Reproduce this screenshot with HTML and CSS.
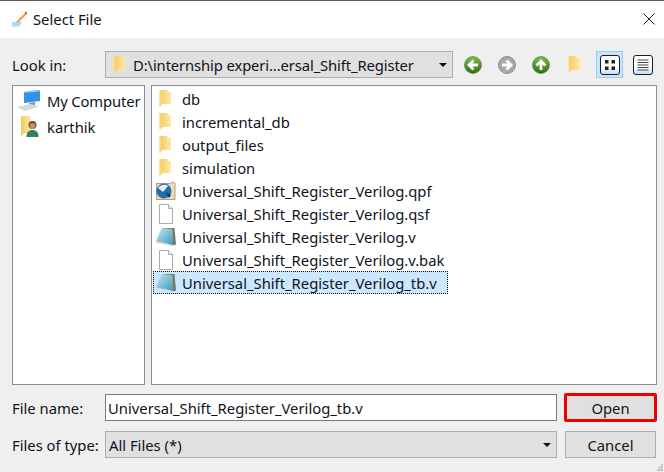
FILE: index.html
```html
<!DOCTYPE html>
<html lang="en">
<head>
<meta charset="utf-8">
<title>Select File</title>
<link rel="stylesheet" href="styles.css">
</head>
<body>
<svg class="defs" width="0" height="0" aria-hidden="true">
  <defs>
    <linearGradient id="fold" x1="0" y1="0" x2="1" y2="0"><stop offset="0" stop-color="#f4c95c"/><stop offset="1" stop-color="#fde9a8"/></linearGradient>
    <linearGradient id="note" x1="0" y1="0" x2="1" y2="1"><stop offset="0" stop-color="#c6e8f1"/><stop offset="1" stop-color="#3f97bd"/></linearGradient>
    <linearGradient id="green" x1="0" y1="0" x2="0" y2="1"><stop offset="0" stop-color="#7fbb52"/><stop offset="1" stop-color="#2d7016"/></linearGradient>
    <linearGradient id="btn" x1="0" y1="0" x2="0" y2="1"><stop offset="0" stop-color="#ffffff"/><stop offset=".6" stop-color="#ffffff"/><stop offset="1" stop-color="#b9dcf8"/></linearGradient>
    <symbol id="folder" viewBox="0 0 12 17">
      <path d="M0 0h8.500v2H12v12H3.500L1.500 16.500 0 16z" fill="url(#fold)"/>
      <path d="M0 0h1.500v16.500L0 16z" fill="#fbe6a0"/>
    </symbol>
    <symbol id="page" viewBox="0 0 14 20">
      <path d="M.5 .5h9l4 4v15H.5z" fill="#fff" stroke="#a9adb3"/>
      <path d="M9.500 .5v4h4" fill="#eceef0" stroke="#a9adb3"/>
    </symbol>
    <symbol id="notepad" viewBox="0 0 20 19">
      <path d="M6 .5h12.500L20 17l-5 1.500z" fill="#7d7458"/>
      <path d="M5.500 .5l11 1 1 16L0 14z" fill="url(#note)"/>
      <path d="M0 14l17.500 3.500-1 1.300L.5 15.500z" fill="#d6dde0"/>
    </symbol>
    <symbol id="arrowdisc" viewBox="0 0 18 18">
      <circle cx="9" cy="9" r="8.500" fill="url(#green)"/>
      <circle cx="9" cy="9" r="8.500" fill="none" stroke="#2f6d1a" stroke-opacity=".5"/>
      <path d="M14 9H6M9.500 4.500 5 9l4.500 4.500" fill="none" stroke="#fff" stroke-width="2.800"/>
    </symbol>
  </defs>
</svg>
<main class="dialog">
  <div class="topline"></div>
  <header class="titlebar">
    <svg class="app-icon" width="16" height="16" viewBox="0 0 16 16">
      <path d="M0 11h10l-2.500 4.500H0z" fill="#a8dcf5"/>
      <path d="M4 11 13 2l1.500 1.500L6 12z" fill="#f0a030"/>
      <path d="M12.500 1.500l1-1 2 2-1 1z" fill="#e83a2e"/>
    </svg>
    <h1 class="title">Select File</h1>
    <svg class="close" width="12" height="12" viewBox="0 0 12 12"><path d="M.5.500l11 11M11.500.500l-11 11" stroke="#222" fill="none"/></svg>
  </header>
  <section class="body">
    <div class="toolbar">
      <label class="label">Look in:</label>
      <div class="combo path">
        <svg class="combo-folder" width="12" height="17"><use href="#folder"/></svg>
        <span class="combo-text">D:\internship experi...ersal_Shift_Register</span>
        <span class="caret"></span>
      </div>
      <div class="tools">
        <svg class="tool" width="18" height="18"><use href="#arrowdisc"/></svg>
        <svg class="tool gray" width="18" height="18" viewBox="0 0 18 18">
          <circle cx="9" cy="9" r="8.500" fill="#a8a8a8" stroke="#8f8f8f"/>
          <path d="M4 9h8M8.500 4.500 13 9l-4.500 4.500" fill="none" stroke="#fff" stroke-width="2.800"/>
        </svg>
        <svg class="tool" width="18" height="18" viewBox="0 0 18 18">
          <circle cx="9" cy="9" r="8.500" fill="url(#green)" stroke="#2f6d1a" stroke-opacity=".5"/>
          <path d="M9 14V6M4.500 9.500 9 5l4.500 4.500" fill="none" stroke="#fff" stroke-width="2.800"/>
        </svg>
        <svg class="tool newfolder" width="12" height="17"><use href="#folder"/></svg>
        <span class="viewbtn active">
          <svg width="20" height="20" viewBox="0 0 20 20">
            <rect x=".5" y=".5" width="19" height="19" rx="2.500" fill="url(#btn)" stroke="#1a1a2a"/>
            <path d="M5 5h3.500v3.500H5zM11.500 5H15v3.500h-3.500zM5 11.500h3.500V15H5zM11.500 11.500H15V15h-3.500z" fill="#222"/>
          </svg>
        </span>
        <span class="viewbtn">
          <svg width="20" height="20" viewBox="0 0 20 20">
            <rect x=".5" y=".5" width="19" height="19" rx="2.500" fill="url(#btn)" stroke="#1a1a2a"/>
            <path d="M4.500 5h11M4.500 7.500h11M4.500 10h11M4.500 12.500h11M4.500 15h11" stroke="#444" stroke-width="1.200"/>
          </svg>
        </span>
      </div>
    </div>

    <div class="panes">
      <ul class="pane sidebar">
        <li class="side-row">
          <svg class="side-icon" width="24" height="22" viewBox="0 0 24 22">
            <path d="M7 2l16-2v11L7 13z" fill="#2f93e6"/>
            <path d="M7 2l16-2v1.500L8 3z" fill="#86c4f2"/>
            <path d="M12 13l6-1v3l-6 1z" fill="#8a929a"/>
            <path d="M0 17l14-3 8 2.500L8 21z" fill="#d4d7da"/>
          </svg>
          <span class="side-name">My Computer</span>
        </li>
        <li class="side-row">
          <svg class="side-icon" width="24" height="22" viewBox="0 0 24 22">
            <path d="M4 0h9v3h1v14H7l-3 4z" fill="url(#fold)"/>
            <circle cx="15.500" cy="9" r="4" fill="#6e4a32"/>
            <circle cx="15.500" cy="10" r="3" fill="#c48a62"/>
            <path d="M9.500 21c0-5 2.500-7 6-7s6 2 6 7z" fill="#33805a"/>
          </svg>
          <span>karthik</span>
        </li>
      </ul>
      <ul class="pane files">
        <li class="row"><svg class="file-icon" width="20" height="17"><use href="#folder" width="12" height="17" x="3"/></svg><span>db</span></li>
        <li class="row"><svg class="file-icon" width="20" height="17"><use href="#folder" width="12" height="17" x="3"/></svg><span>incremental_db</span></li>
        <li class="row"><svg class="file-icon" width="20" height="17"><use href="#folder" width="12" height="17" x="3"/></svg><span>output_files</span></li>
        <li class="row"><svg class="file-icon" width="20" height="17"><use href="#folder" width="12" height="17" x="3"/></svg><span>simulation</span></li>
        <li class="row">
          <svg class="file-icon" width="20" height="20" viewBox="0 0 20 20">
            <path d="M.5 2.500h14l1-1.500 3.500 1V18.500H.5z" fill="#f3d9b4" stroke="#b09a80"/>
            <circle cx="8" cy="10" r="7.500" fill="#1d6fae"/>
            <path d="M2 7c3-4 8-4 10-2L7 11z" fill="#e3edf3"/>
            <path d="M9 11l6 3-2 3z" fill="#0e3f6a"/>
          </svg>
          <span>Universal_Shift_Register_Verilog.qpf</span>
        </li>
        <li class="row"><svg class="file-icon" width="20" height="20"><use href="#page" width="14" height="20" x="3"/></svg><span>Universal_Shift_Register_Verilog.qsf</span></li>
        <li class="row"><svg class="file-icon" width="20" height="20"><use href="#notepad"/></svg><span>Universal_Shift_Register_Verilog.v</span></li>
        <li class="row"><svg class="file-icon" width="20" height="20"><use href="#page" width="14" height="20" x="3"/></svg><span>Universal_Shift_Register_Verilog.v.bak</span></li>
        <li class="row selected"><svg class="file-icon" width="20" height="20"><use href="#notepad"/></svg><span>Universal_Shift_Register_Verilog_tb.v</span></li>
      </ul>
    </div>

    <div class="form">
      <label class="label">File name:</label>
      <input class="input" type="text" value="Universal_Shift_Register_Verilog_tb.v">
      <button class="btn primary" type="button">Open</button>
      <label class="label">Files of type:</label>
      <div class="combo type">
        <span class="combo-text">All Files (*)</span>
        <span class="caret"></span>
      </div>
      <button class="btn" type="button">Cancel</button>
    </div>
  </section>
  <svg class="grip" width="7" height="7" viewBox="0 0 7 7"><path d="M4 0h2v2H4zM2 2.500h2v2H2zM4 2.500h2v2H4zM0 5h2v2H0zM2 5h2v2H2zM4 5h2v2H4z" fill="#c4c4c4"/></svg>
</main>
</body>
</html>
```

FILE: styles.css
```css
* { box-sizing: border-box; }

html, body {
  margin: 0;
  padding: 0;
  width: 664px;
  height: 472px;
  overflow: hidden;
}

body {
  font-family: "Noto Sans", "Open Sans", sans-serif;
  font-size: 14.8px;
  color: #10131a;
  background: #efefef;
}

.defs { display: block; height: 0; }

.dialog {
  display: flex;
  flex-direction: column;
  height: 472px;
  position: relative;
}

.grip { position: absolute; right: 0; bottom: 1px; }

.topline { height: 1px; background: #5a5a5a; }

.titlebar {
  display: flex;
  align-items: center;
  height: 37px;
  padding: 0 9px 1px 12px;
  background: #fff;
}

.app-icon { flex: none; margin-right: 5px; }

.title {
  flex: 1;
  margin: 0;
  font-size: 14.8px;
  font-weight: 400;
}

.body {
  flex: 1;
  padding: 13px 7px 0 12px;
}

.toolbar {
  display: flex;
  align-items: center;
  height: 27px;
}

.label { display: block; white-space: nowrap; }

.toolbar .label { flex: none; width: 93px; }

.combo {
  display: flex;
  align-items: center;
  height: 27px;
  background: #e0e0e0;
  border: 1px solid #adadad;
  position: relative;
}

.path { flex: none; width: 348px; padding-left: 7px; }

.path .combo-text { letter-spacing: -0.12px; }

.combo-folder { margin-right: 8px; flex: none; }

.combo-text { flex: 1; white-space: nowrap; }

.type { padding-left: 3px; }

.caret {
  flex: none;
  width: 0;
  height: 0;
  margin-right: 5px;
  border-left: 4px solid transparent;
  border-right: 4px solid transparent;
  border-top: 4px solid #111;
}

.tools {
  display: flex;
  align-items: center;
  flex: 1;
  padding-left: 11px;
}

.tool { flex: none; display: block; margin-right: 16px; }

.tool.newfolder { margin: 0 16px 0 2px; }

.viewbtn {
  display: flex;
  align-items: center;
  justify-content: center;
  flex: none;
  width: 27px;
  height: 27px;
  margin-right: 6px;
  border: 1px solid transparent;
}

.viewbtn.active { background: #cce4f7; border-color: #99ccf3; }

.panes {
  display: flex;
  gap: 6px;
  height: 300px;
  margin-top: 7px;
}

.pane {
  margin: 0;
  list-style: none;
  background: #fff;
  border: 1px solid #8a8d94;
}

.sidebar { width: 133px; flex: none; padding: 2px 0 0 0; }

.files { flex: 1; padding: 1px 1px 0 1px; }

.side-row {
  display: flex;
  align-items: center;
  height: 26px;
  padding-left: 4px;
  white-space: nowrap;
}

.side-icon { flex: none; margin-right: 6px; display: block; }

.side-name { letter-spacing: -0.15px; }

.row {
  display: flex;
  align-items: center;
  width: fit-content;
  min-width: 30px;
  height: 23px;
  padding-right: 10px;
  border: 1px solid transparent;
  white-space: nowrap;
}

.file-icon { flex: none; margin: 0 6px 0 2px; display: block; }

.row.selected {
  background: #cce8ff;
  border: 1px dotted #111;
}

.form {
  display: grid;
  grid-template-columns: 93px 452px 99px;
  grid-template-rows: 27px 27px;
  column-gap: 0;
  row-gap: 10px;
  align-items: center;
  margin-top: 9px;
}

.input {
  width: 452px;
  height: 27px;
  padding: 0 2px;
  font: inherit;
  color: inherit;
  background: #fff;
  border: 1px solid #7a7a7a;
  border-radius: 0;
  outline: none;
}

.form .type { width: 452px; }

.btn {
  justify-self: end;
  width: 91px;
  height: 27px;
  padding: 0;
  font: inherit;
  color: inherit;
  background: #e0e0e0;
  border: 1px solid #adadad;
  border-radius: 0;
}

.btn.primary {
  outline: 3px solid #f00000;
  outline-offset: -2px;
  border-radius: 1px;
}
```
